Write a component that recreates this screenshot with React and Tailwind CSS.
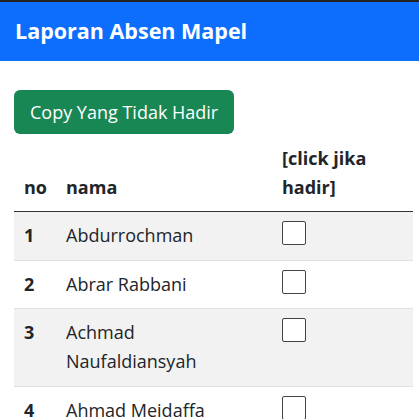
import React from "react";

const rows = [
  { no: 1, nama: "Abdurrochman" },
  { no: 2, nama: "Abrar Rabbani" },
  { no: 3, nama: "Achmad Naufaldiansyah" },
  { no: 4, nama: "Ahmad Meidaffa" },
  { no: 5, nama: "Aldi Pratama" },
];

export default function App() {
  return (
    <div className="h-[419px] w-[419px] overflow-hidden bg-white font-['Open_Sans',sans-serif] text-[#212529]">
      <div className="h-[2px] bg-[#222]" />
      <div className="flex h-[59px] items-center bg-[#0d6efd] px-[15px]">
        <h1 className="text-[21.5px] font-bold text-white">Laporan Absen Mapel</h1>
      </div>
      <div className="pl-[14px] pr-[6px] pt-[29px]">
        <button className="h-[44px] rounded-[6px] bg-[#198754] px-4 text-[18px] text-white">
          Copy Yang Tidak Hadir
        </button>
        <table className="mt-px w-full table-fixed border-collapse text-[18px] leading-[29px]">
          <colgroup>
            <col className="w-[42px]" />
            <col className="w-[216px]" />
            <col className="w-[141px]" />
          </colgroup>
          <thead>
            <tr className="border-b border-[#333]">
              <th className="px-[10px] py-[9px] text-left align-bottom font-bold">no</th>
              <th className="px-[10px] py-[9px] text-left align-bottom font-bold">nama</th>
              <th className="px-[10px] py-[9px] text-left align-bottom font-bold">[click jika hadir]</th>
            </tr>
          </thead>
          <tbody>
            {rows.map((r, i) => (
              <tr
                key={r.no}
                className={`border-b border-[#dee2e6] ${i % 2 === 0 ? "bg-[#f2f2f2]" : "bg-white"}`}
              >
                <td className="px-[10px] py-[9.25px] align-top font-bold">{r.no}</td>
                <td className="px-[10px] py-[9.25px] align-top">{r.nama}</td>
                <td className="px-[10px] py-[9.25px] align-top">
                  <input
                    type="checkbox"
                    className="block h-[24px] w-[24px] appearance-none rounded-[2px] border border-[#444] bg-white"
                  />
                </td>
              </tr>
            ))}
          </tbody>
        </table>
      </div>
    </div>
  );
}
